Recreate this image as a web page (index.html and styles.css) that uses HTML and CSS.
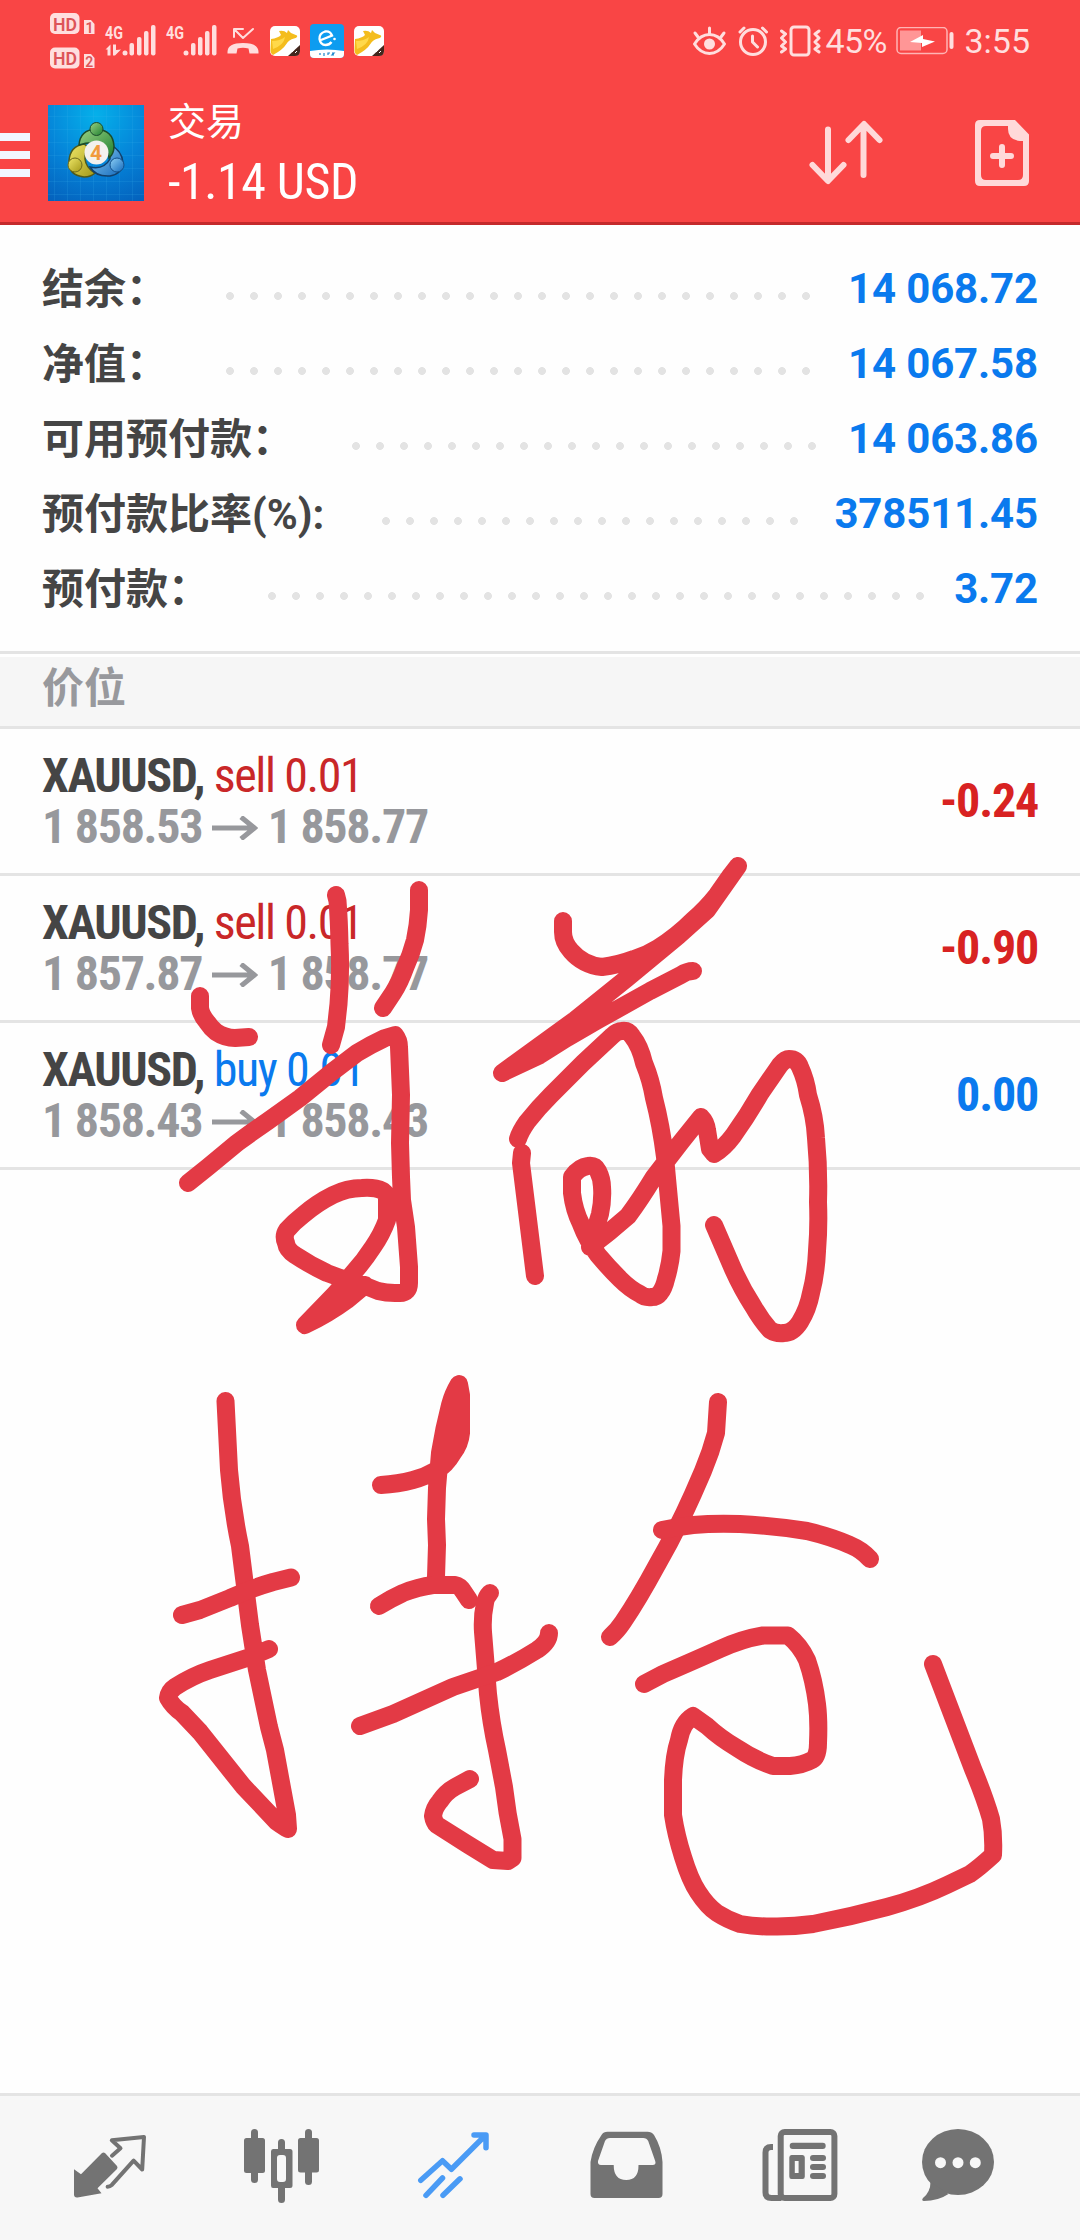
FILE: index.html
```html
<!DOCTYPE html>
<html lang="zh-CN">
<head>
    <meta charset="UTF-8">
    <meta name="viewport" content="width=device-width, initial-scale=1.0">
    <title>交易</title>
    <link rel="stylesheet" href="styles.css">
</head>
<body>
    <header class="header">
        <div class="status-bar">
            <svg class="status-left" width="400" height="84" viewBox="0 0 400 84">
                <!-- HD badges -->
                <g class="tint">
                    <rect x="50" y="13" width="29.5" height="21" rx="5"/>
                    <path d="M84 20h7l3.500 4v10h-10.500z"/>
                    <rect x="50" y="47.500" width="29.500" height="21" rx="5"/>
                    <path d="M84 54h7l3.500 4v10h-10.500z"/>
                </g>
                <g class="badge-text">
                    <text x="53" y="30.500" font-size="19" textLength="24" lengthAdjust="spacingAndGlyphs">HD</text>
                    <text x="53" y="65" font-size="19" textLength="24" lengthAdjust="spacingAndGlyphs">HD</text>
                    <text x="85.500" y="33" font-size="14">1</text>
                    <text x="85.300" y="67" font-size="14">2</text>
                </g>
                <!-- signal -->
                <g class="tint">
                    <text class="net" x="105" y="38.500" textLength="18" lengthAdjust="spacingAndGlyphs">4G</text>
                    <text class="net" x="166" y="38.500" textLength="18" lengthAdjust="spacingAndGlyphs">4G</text>
                    <path d="M105.500 49.500l5-5v11h-3v-6zM113 44.500h3v5.500l5-.5-6 6h-2z"/>
                    <circle cx="125" cy="53" r="2.500"/>
                    <rect x="129.500" y="43" width="4.500" height="12.500" rx="2"/>
                    <rect x="137" y="37" width="4.500" height="18.500" rx="2"/>
                    <rect x="144" y="31" width="4.500" height="24.500" rx="2"/>
                    <rect x="151" y="25" width="4.500" height="30.500" rx="2"/>
                    <circle cx="186" cy="53" r="2.500"/>
                    <rect x="191" y="43" width="4.500" height="12.500" rx="2"/>
                    <rect x="198" y="37" width="4.500" height="18.500" rx="2"/>
                    <rect x="205" y="31" width="4.500" height="24.500" rx="2"/>
                    <rect x="212" y="25" width="4.500" height="30.500" rx="2"/>
                    <path d="M227.500 52q0-9 15.500-9t15.500 9v1.500h-9l-1-5q-5.500-1.500-11 0l-1 5h-9z"/>
                </g>
                <path class="line thin" d="M234 37v-8h9M234 29l9 9 10-9"/>
                <!-- notification apps -->
                <g id="fox">
                    <rect x="270" y="26" width="30" height="30" rx="5" fill="#fff"/>
                    <path d="M271 39q7-1 10-4l-2-4q5-1 8 2l1-3 3 3 6 2.500q1 2-3 3-5 1-8 6-3 5-13 10.500-3-2-2.500-6z" fill="#f4bd1d"/>
                    <path d="M272 41q8 0 13-4-1 8-12 12z" fill="#ffd94a"/>
                    <path d="M300 45v6q0 5-5 5h-7z" fill="#43261d"/>
                    <path d="M292 52l2-2M295 53l2-2" stroke="#fff"/>
                </g>
                <use href="#fox" x="84"/>
                <rect x="310" y="24" width="34" height="34" rx="4" fill="#0d9cf0"/>
                <path d="M310 51q17-3 34 0v3q0 4-4 4h-26q-4 0-4-4z" fill="#fff"/>
                <path d="M321 40l11-4.500q-2-5-7-4-6 2-5.500 7.500 1 6 6 6 4 0 6-3" fill="none" stroke="#fff" stroke-width="2.300"/>
                <circle cx="334.500" cy="39" r="1.300" fill="#fff"/>
                <path d="M320 55v-2M324 56v-3M328 55v-2h2M332 53h2l-2 2h2" fill="none" stroke="#1b86cc" stroke-width="1.200"/>
            </svg>
            <div class="status-right">
                <svg width="130" height="34" viewBox="692 23 130 34">
                    <g class="line">
                        <path d="M695.500 43q6-9.500 15-9.500t15 9.500q-6 9.500-15 9.500t-15-9.500zM710.500 27v5M696 32l3 4M725 32l-3 4"/>
                        <circle cx="754" cy="41" r="12.500"/>
                        <path d="M753.500 35v6l5 5M741 31l4-4M767.500 31l-4-4"/>
                        <rect x="792" y="26" width="18" height="28" rx="3"/>
                        <path d="M782.500 30l4 3-4 4 4 4-4 4 4 3-4 3M820 30l-4 3 4 4-4 4 4 4-4 3 4 3"/>
                    </g>
                    <circle class="tint" cx="710.500" cy="43" r="5.500"/>
                </svg>
                <span class="percent">45%</span>
                <svg width="58" height="28" viewBox="898 27 58 28">
                    <rect x="899" y="27.500" width="50" height="26" rx="4" class="battery-box"/>
                    <rect x="902" y="30.500" width="21" height="20" fill="#ff9696"/>
                    <path d="M912 42l13-7v4l12 2.500-13 5.500v-4z" fill="#fff"/>
                    <rect x="951.500" y="32" width="4" height="17" rx="2" class="tint"/>
                </svg>
                <span class="clock">3:55</span>
            </div>
        </div>
        <div class="app-bar">
            <div class="menu"><i></i><i></i><i></i></div>
            <svg class="logo" width="96" height="96" viewBox="0 0 96 96">
                <defs>
                    <radialGradient id="sky" cx=".5" cy=".1" r="1">
                        <stop offset="0" stop-color="#05b0ea"/>
                        <stop offset=".55" stop-color="#0583d8"/>
                        <stop offset="1" stop-color="#0462bd"/>
                    </radialGradient>
                    <linearGradient id="green" x2="1" y2="1">
                        <stop offset="0" stop-color="#9bd283"/>
                        <stop offset="1" stop-color="#1f8030"/>
                    </linearGradient>
                    <linearGradient id="gold" x2="1" y2="1">
                        <stop offset="0" stop-color="#efe768"/>
                        <stop offset="1" stop-color="#a39818"/>
                    </linearGradient>
                    <linearGradient id="azure" x2="1" y2="1">
                        <stop offset="0" stop-color="#8fd0f5"/>
                        <stop offset="1" stop-color="#1268bb"/>
                    </linearGradient>
                </defs>
                <rect width="96" height="96" fill="url(#sky)"/>
                <path d="M6.500 0v96M19.500 0v96M32.500 0v96M45.500 0v96M58.500 0v96M71.500 0v96M84.500 0v96M0 11.500h96M0 24.500h96M0 37.500h96M0 50.500h96M0 63.500h96M0 76.500h96M0 89.500h96" stroke="#3fb4ee" stroke-opacity=".16"/>
                <path d="M36 39q-14 2-15 17-1 14 15 16 7 0 11-4-9-5-10-14 0-8 3-12z" fill="url(#gold)" stroke="#4f5a1c" stroke-width="1.500"/>
                <path d="M62 40q12 5 13 18-1 11-13 13-14 1-20-9 14 3 20-8z" fill="url(#azure)" stroke="#12406b" stroke-width="1.500"/>
                <path d="M31 40q1-15 17-16 17 1 18 17 0 8-5 12-1-12-13-15-8-1-17 2z" fill="url(#green)" stroke="#1b4d2b" stroke-width="1.500"/>
                <circle cx="48.500" cy="24" r="6.500" fill="url(#green)" stroke="#1b4d2b"/>
                <circle cx="27" cy="60" r="7" fill="url(#gold)" stroke="#6b681c"/>
                <circle cx="69" cy="60" r="7" fill="url(#azure)" stroke="#12508b"/>
                <circle cx="48.500" cy="47.500" r="12" fill="#f3f1ee"/>
                <text x="48" y="55" text-anchor="middle" class="logo-digit">4</text>
            </svg>
            <div class="titles">
                <h1>交易</h1>
                <p class="profit condensed">-1.14 USD</p>
            </div>
            <svg class="sort" width="76" height="70" viewBox="808 118 76 70">
                <path class="line action" d="M828 129.500v50.500M812.500 165l15.500 16 15.500-16M863.500 175v-50M848.500 140l15.500-16 15.500 16"/>
            </svg>
            <svg class="new-order" width="56" height="68" viewBox="974 119 56 68">
                <path class="action-fill" fill-rule="evenodd" d="M980 120h35l14 14.500v46.500q0 5-5 5h-44q-5 0-5-5v-56q0-5 5-5zM986 126q-5 0-5 5v44q0 5 5 5h32q5 0 5-5v-34h-3q-12-1-12-12v-3z"/>
                <path class="line action" d="M1002 147v18M993 156h18"/>
            </svg>
        </div>
    </header>

    <main class="main-content">
        <section class="account">
            <div class="account-row"><span class="label">结余：</span><i class="leader"></i><b>14 068.72</b></div>
            <div class="account-row"><span class="label">净值：</span><i class="leader"></i><b>14 067.58</b></div>
            <div class="account-row"><span class="label">可用预付款：</span><i class="leader"></i><b>14 063.86</b></div>
            <div class="account-row"><span class="label">预付款比率(%):</span><i class="leader"></i><b>378511.45</b></div>
            <div class="account-row"><span class="label">预付款：</span><i class="leader"></i><b>3.72</b></div>
        </section>

        <h2 class="section-title">价位</h2>

        <section class="positions condensed">
            <div class="position">
                <div>
                    <p class="symbol">XAUUSD, <span class="sell">sell 0.01</span></p>
                    <p class="prices">1 858.53 <svg class="arrow" width="46" height="24" viewBox="0 0 46 24"><path d="M0 12h43M29 1l13.500 11-13.500 11"/></svg> 1 858.77</p>
                </div>
                <span class="result loss">-0.24</span>
            </div>
            <div class="position">
                <div>
                    <p class="symbol">XAUUSD, <span class="sell">sell 0.01</span></p>
                    <p class="prices">1 857.87 <svg class="arrow" width="46" height="24" viewBox="0 0 46 24"><path d="M0 12h43M29 1l13.500 11-13.500 11"/></svg> 1 858.77</p>
                </div>
                <span class="result loss">-0.90</span>
            </div>
            <div class="position">
                <div>
                    <p class="symbol">XAUUSD, <span class="buy">buy 0.01</span></p>
                    <p class="prices">1 858.43 <svg class="arrow" width="46" height="24" viewBox="0 0 46 24"><path d="M0 12h43M29 1l13.500 11-13.500 11"/></svg> 1 858.43</p>
                </div>
                <span class="result buy">0.00</span>
            </div>
        </section>
    </main>

    <nav class="tab-bar">
        <a href="#" class="tab">
            <svg viewBox="0 0 100 96">
                <path d="M14 49.300l7 5 21-21.300q1.500-1 3 0l12 13q1 1.500 0 3l-19.500 19.300 4 5-24 4.200q-3.500.3-3.500-3z"/>
                <path class="stroke" stroke-width="4" d="M52 35.700l8.500-7.400-8.700-8 32.200-3.300-1.800 32.500-8.600-8.800-22 24.500q-1.500 1.500-4 1.500"/>
            </svg>
        </a>
        <a href="#" class="tab">
            <svg viewBox="0 0 100 96">
                <rect x="12" y="18" width="21" height="35" rx="2.500"/>
                <rect x="19" y="9" width="7" height="54" rx="3.500"/>
                <path fill-rule="evenodd" d="M41 29h17q2.500 0 2.500 2.500v34q0 2.500-2.500 2.500h-17q-2 0-2-2.500v-34q0-2.500 2-2.500zM48 35q-3 0-3 3v21q0 3 3 3h3q3 0 3-3v-21q0-3-3-3z"/>
                <path class="stroke" stroke-width="7" d="M49.500 22.500v7M49.500 66v13.500"/>
                <rect x="66" y="18" width="21" height="34.500" rx="2.500"/>
                <rect x="73" y="9" width="7" height="56" rx="3.500"/>
            </svg>
        </a>
        <a href="#" class="tab active">
            <svg viewBox="0 0 100 96">
                <path class="stroke" stroke-width="5.500" d="M16.800 60.300l21.700-19.600 8.900 8.600 34.100-34M70 15h12v12.700"/>
                <path class="stroke" stroke-width="5.500" d="M22 75.300l16.500-17.300M39 75.300l17-16.500"/>
            </svg>
        </a>
        <a href="#" class="tab">
            <svg viewBox="0 0 100 96">
                <path fill-rule="evenodd" d="M14.500 42q2-14 11-27 2-3.300 6-3.300h40q4 0 6.500 3.300 7.500 12 8.500 27v32q0 4-4 4h-64q-4 0-4-4zM34 18q-3.500 0-5 3l-7 20q-.5 4 3 4h12.700q0 15 12.500 15t12.300-15h14q4 0 2.700-4l-7-20q-1.500-3-5-3z"/>
            </svg>
        </a>
        <a href="#" class="tab">
            <svg viewBox="0 0 100 96">
                <rect class="stroke" stroke-width="6" x="32.700" y="12" width="53.700" height="66" rx="4"/>
                <path class="stroke flat" stroke-width="6" d="M25 27h-2q-5.500 0-5.500 5.500v40q0 5.500 6 5.500h10"/>
                <rect x="41.700" y="22.700" width="36" height="6.300" rx="3"/>
                <path fill-rule="evenodd" d="M43.500 35h11q2.300 0 2.300 2.500v19q0 2.500-2.300 2.500h-11q-2.200 0-2.200-2.500v-19q0-2.500 2.200-2.500zM46.800 41v12h3.800v-12z"/>
                <rect x="62" y="35" width="16" height="6" rx="3"/>
                <rect x="62" y="44" width="16" height="6" rx="3"/>
                <rect x="62" y="53" width="16" height="6" rx="3"/>
            </svg>
        </a>
        <a href="#" class="tab">
            <svg viewBox="0 0 100 96">
                <ellipse cx="38" cy="42" rx="36" ry="33"/>
                <path d="M10.500 62q0 10-7.500 16-2 2.500 1 3 14 0 24.500-7z"/>
                <g class="holes">
                    <circle cx="20.500" cy="42.700" r="5.500"/>
                    <circle cx="38" cy="42.700" r="5.500"/>
                    <circle cx="55.300" cy="42.700" r="5.500"/>
                </g>
            </svg>
        </a>
    </nav>

    <!-- handwritten note over the screen -->
    <svg class="note" viewBox="0 0 1080 2240">
        <path d="M336 895L337.500 901Q339 920 339.500 944 341 974 338.500 1004L336 1027 331 1045"/>
        <path d="M419 890V910Q418 926 415 940 411 955 405 968 400 982 393 993L383 1008"/>
        <path d="M200 996V1008Q201 1015 207 1022 211 1028 216 1032 225 1038 235 1038L249 1037"/>
        <path d="M188 1183L208 1167 237 1143Q252 1132 268 1121L300 1098 332 1072 357 1053Q370 1045 385 1038L395 1035Q399 1040 399 1047L401 1095 400 1143 401 1177 402 1200 406 1227 409 1267V1283Q409 1293 400 1293H395Q386 1293 378 1291L358 1283Q342 1279 327 1273 310 1265 295 1255 287 1250 286 1243 283 1236 287 1230 294 1222 303 1215 317 1203 333 1195 347 1188 362 1188 375 1187 383 1191 388 1195 387 1200V1220Q382 1234 373 1247 364 1261 353 1273L335 1294 305 1325Q328 1314 347 1300L365 1285"/>
        <path d="M563 921V932Q563 942 571 951 583 965 602 967 618 965 634 959 647 955 658 948 677 936 693 920 706 909 717 895L731 875 738 866 707 910 678 936 626 979 575 1020 502 1073 540 1055 567 1038 598 1020 650 991 681 975Q687 971 693 971"/>
        <path d="M518 1139Q520 1132 527 1122 538 1108 551 1095L583 1063 612 1036Q617 1031 622 1031 628 1030 632 1036 640 1046 644 1063 651 1080 654 1098 661 1125 665 1157L668 1189 671.500 1226V1251Q670 1266 666 1279 664 1288 660 1293 657 1297 652 1297 645 1298 640 1294 630 1289 620 1279 609 1268 598 1255 587 1240 581 1224 574 1210 572 1193V1177Q579 1167 588 1166 595 1165 598 1171 602 1179 602 1187 603 1200 600 1214L590 1247Q610 1232 628 1216 640 1200 654 1177L681 1142 701 1117Q706 1122 707 1130L710 1149 714 1154Q724 1148 733 1136 748 1115 760 1094L780 1065Q785 1059 789 1059 797 1059 800 1067 806 1080 808 1095 815 1117 816 1138 819 1170 818 1202 819 1227 817 1251 816 1274 811 1293 808 1309 800 1322 793 1333 784 1333 776 1334 770 1330 761 1320 753 1306 742 1289 733 1269L714 1225"/>
        <path d="M522 1153L521 1163 535 1276"/>
        <path d="M225.500 1401L229 1470Q232 1508 240 1546L250 1625 257 1670 269 1727 275 1750 287 1815 288 1829Q284 1827 277 1822L243 1786 200 1732 182 1713Q173 1707 168 1698 169 1691 175 1687 192 1676 210 1670L250 1657 269 1649"/>
        <path d="M182 1615L200 1610 230 1598Q252 1588 273 1582L291 1577.500"/>
        <path d="M381 1485Q398 1484 413 1480 425 1477 437 1470 446 1465 453 1453 460 1444 461 1433V1395L459 1384Q453 1394 450 1405 444 1428 440 1453L437 1488 436 1519 437 1545 436 1577M456 1396L453 1432 445 1460"/>
        <path d="M379 1606Q390 1599 403 1593 418 1587 433 1585H455Q460 1586 463 1591L469 1600"/>
        <path d="M490 1593Q486 1597 485 1603 482 1617 483 1632L488 1694Q491 1723 497 1750L504 1787Q507 1813 512.500 1839V1858L508 1861 493 1860 467 1844 437 1825Q434 1822 433 1816 434 1808 440 1801 446 1792 455 1787L470 1779"/>
        <path d="M360 1726L393 1714 453 1687 497 1672Q518 1662 537 1650 549 1642 549 1633"/>
        <path d="M718 1402L716 1433Q711 1452 703 1471L693 1494Q676 1532 657 1565 638 1600 623 1622 617 1631 610 1637"/>
        <path d="M662 1530Q676 1527 693 1525 715 1523 740 1524 775 1526 807 1531 832 1537 850 1545 862 1550 870 1559"/>
        <path d="M644 1684L663 1674Q700 1658 720 1649 742 1639 763 1635.500H788Q800 1645 807 1660 814 1680 817 1704 819 1720 818 1743 818 1757 812 1760 803 1765 790 1766H773Q755 1760 737 1748 720 1738 707 1726L693 1716Q682 1723 679 1740 674 1755 673 1780V1815Q676 1835 683 1857 690 1880 698 1892 707 1906 717 1913 728 1920 740 1924 757 1927 777 1926.500 795 1926.500 813 1924 850 1917 887 1907 920 1898 947 1885L970 1874Q980 1867 993 1855 994 1835 991 1819 985 1798 973 1769L933 1664"/>
    </svg>
</body>
</html>
```
FILE: styles.css
```css
* {
    margin: 0;
    padding: 0;
    box-sizing: border-box;
}

body {
    position: relative;
    display: flex;
    flex-direction: column;
    width: 1080px;
    height: 2240px;
    overflow: hidden;
    background: #fefefe;
    color: #454545;
    font-family: Roboto, "Noto Sans CJK SC", sans-serif;
}

.condensed {
    font-family: "Roboto Condensed", Roboto, sans-serif;
    font-stretch: 75%;
}

.header {
    height: 225px;
    background: #f94545;
    border-bottom: 3px solid #c42a2c;
    color: #fff;
}

.status-bar {
    display: flex;
    justify-content: space-between;
    height: 84px;
    padding-right: 50px;
}

.status-right {
    display: flex;
    align-items: center;
    height: 82px;
    font-size: 34px;
    color: #ffdede;
}

.percent {
    width: 62px;
    margin-left: 4px;
    letter-spacing: -0.6px;
}

.status-right .percent + svg {
    margin: 0 10px 0 9px;
}

.tint {
    fill: #ffdede;
}

.line {
    fill: none;
    stroke: #ffdede;
    stroke-width: 3;
    stroke-linecap: round;
    stroke-linejoin: round;
}

.line.thin {
    stroke-width: 2;
}

.line.action {
    stroke: #ffd9d9;
    stroke-width: 6;
}

.action-fill {
    fill: #ffd9d9;
}

.battery-box {
    fill: none;
    stroke: #ffb4b4;
    stroke-width: 1.5;
}

.badge-text {
    fill: #dd5459;
    font-weight: 600;
}

.net {
    font-size: 19px;
    font-weight: 700;
}

.app-bar {
    display: flex;
    align-items: center;
    height: 138px;
    padding-right: 50px;
}

.menu {
    display: flex;
    flex-direction: column;
    gap: 10px;
    width: 30px;
    padding-top: 4px;
}

.menu i {
    height: 8px;
    background: #f2f5ff;
}

.logo {
    margin: 0 24px 0 18px;
}

.logo-digit {
    font-size: 21px;
    font-weight: 700;
    fill: #f19a3e;
}

.titles {
    flex: 1;
    height: 138px;
    padding-top: 10px;
}

.titles h1 {
    height: 56px;
    font-size: 38px;
    font-weight: 400;
    line-height: 56px;
}

.profit {
    font-size: 50px;
    line-height: 64px;
    letter-spacing: -0.4px;
}

.sort {
    margin-right: 90px;
}

.main-content {
    flex: 1;
}

.account {
    height: 426px;
    padding: 26px 42px 0;
}

.account-row {
    display: flex;
    align-items: center;
    height: 75px;
    font-size: 42px;
}

.label {
    padding-bottom: 6px;
    font-weight: 700;
}

.account-row b {
    color: #0a7aee;
    font-weight: 700;
    letter-spacing: -0.15px;
}

.leader {
    flex: 1;
    height: 8px;
    margin: 15px 28px 0 58px;
    background: radial-gradient(circle at 4px 4px, #e3e3e3 3.6px, transparent 4.2px) 0 0 / 24px 8px repeat-x;
}

.section-title {
    height: 78px;
    padding-left: 42px;
    border-top: 3px solid #e4e4e4;
    border-bottom: 3px solid #e4e4e4;
    box-shadow: inset 0 3px #fff;
    background: #f6f6f6;
    color: #98999d;
    font-size: 42px;
    font-weight: 700;
    line-height: 69px;
}

.position {
    display: flex;
    justify-content: space-between;
    align-items: center;
    height: 147px;
    padding: 0 42px;
    border-bottom: 3px solid #e4e4e4;
    font-size: 48px;
    letter-spacing: -1.4px;
}

.position p {
    height: 51px;
    line-height: 51px;
    white-space: nowrap;
}

.symbol {
    font-weight: 700;
}

.symbol span {
    font-weight: 400;
}

.prices {
    color: #97989c;
    font-weight: 700;
    letter-spacing: -1.3px;
}

.arrow {
    vertical-align: 3px;
}

.arrow path {
    fill: none;
    stroke: #97989c;
    stroke-width: 5;
}

.result {
    padding-bottom: 2px;
    font-weight: 700;
    letter-spacing: -1.2px;
}

.sell {
    color: #c92728;
}

.loss {
    color: #d82222;
}

.buy {
    color: #0a7aee;
}

.tab-bar {
    display: flex;
    align-items: center;
    height: 147px;
    padding: 0 24px;
    border-top: 3px solid #e4e4e4;
    background: #f7f7f7;
}

.tab {
    display: flex;
    flex: 1;
    justify-content: center;
    color: #737373;
}

.tab.active {
    color: #4a9bf5;
}

.tab svg {
    width: 100px;
    height: 96px;
    fill: currentColor;
}

.tab .stroke {
    fill: none;
    stroke: currentColor;
    stroke-linecap: round;
    stroke-linejoin: round;
}

.tab .stroke.flat {
    stroke-linecap: butt;
}

.tab .holes {
    fill: #f7f7f7;
}

.note {
    position: absolute;
    top: 0;
    left: 0;
    width: 1080px;
    height: 2240px;
    fill: none;
    stroke: #e33a45;
    stroke-width: 18;
    stroke-linecap: round;
    stroke-linejoin: round;
    pointer-events: none;
}
```
